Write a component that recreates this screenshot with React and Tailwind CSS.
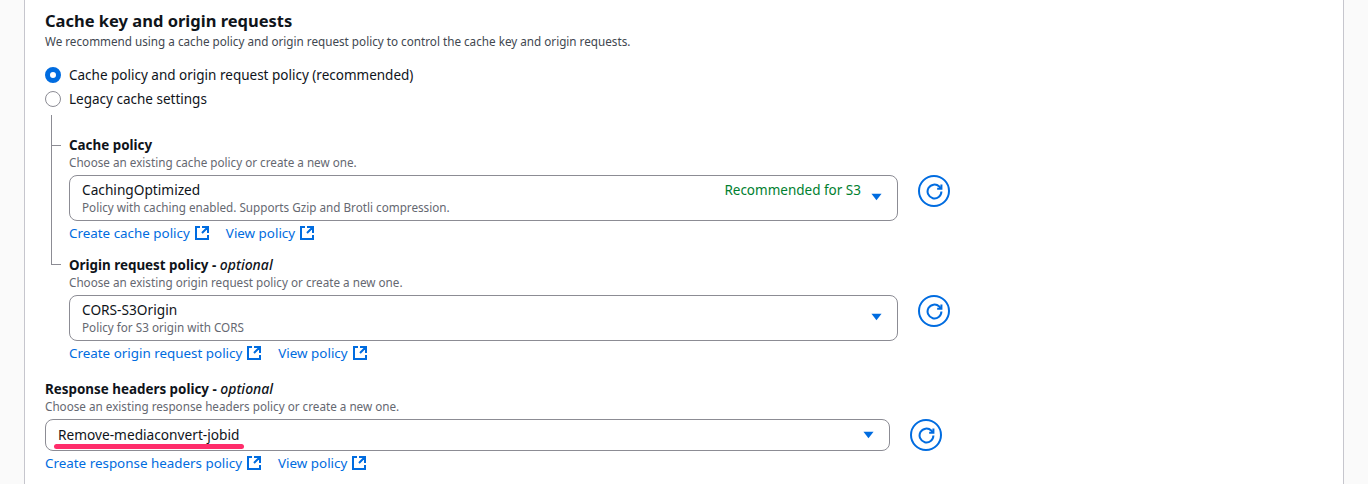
const FONT = "font-['Noto_Sans',sans-serif]";

function Ext() {
  return (
    <svg viewBox="0 0 16 16" className="w-4 h-4 ml-1 shrink-0" fill="none" stroke="#006ce0" strokeWidth="2">
      <path d="M14 8V2H8M14 2L8 8M6 2H2v12h12v-4" />
    </svg>
  );
}

function Links({ create }) {
  return (
    <div className="flex items-center h-5 mt-[2px] gap-4 text-[13.4px] leading-5 text-[#006ce0]">
      <a className="flex items-center">{create}<Ext /></a>
      <a className="flex items-center">View policy<Ext /></a>
    </div>
  );
}

function Refresh() {
  return (
    <button className="w-8 h-8 rounded-full border-2 border-[#006ce0] flex items-center justify-center shrink-0">
      <svg viewBox="0 0 16 16" className="w-[17px] h-[17px]" fill="none" stroke="#006ce0" strokeWidth="1.9">
        <path d="M14.5 8a6.5 6.5 0 1 1-2-4.7L14 5" />
        <path d="M14.5 1.5v4H10.5" />
      </svg>
    </button>
  );
}

function Caret() {
  return (
    <svg viewBox="0 0 12 8" className="w-[11px] h-2 shrink-0">
      <path d="M0.5 0.5h11L6 7.5z" fill="#006ce0" />
    </svg>
  );
}

function Select({ title, desc, tag, small }) {
  return (
    <div className={`flex-1 border border-[#8c8c94] rounded-lg flex pl-3 pr-[15px] ${small ? "h-8 items-center" : "h-[46px] pt-1"}`}>
      <div className="flex-1 min-w-0">
        <div className="text-[13.7px] leading-5 text-[#0f141a]">{title}</div>
        {desc && <div className="text-[11.7px] leading-4 -mt-[1px] text-[#656871]">{desc}</div>}
      </div>
      {tag && <div className="text-[13.5px] leading-5 text-[#00802f] mr-[10px]">{tag}</div>}
      <div className={small ? "flex items-center" : "flex items-center h-[22px] mt-[6px]"}><Caret /></div>
    </div>
  );
}

function Field({ label, optional, hint, children, links }) {
  return (
    <div>
      <div className="text-[13.4px] leading-5 font-bold text-[#0f141a]">
        {label}
        {optional && <span> - <i className="text-[14px] font-medium">optional</i></span>}
      </div>
      <div className="text-[11.7px] leading-4 -mt-[1px] text-[#656871]">{hint}</div>
      <div className="flex items-start gap-5 mt-[5px]">{children}<Refresh /></div>
      <Links create={links} />
    </div>
  );
}

function Radio({ checked, label }) {
  return (
    <label className="flex items-center h-6 text-[13.5px] text-[#0f141a]">
      {checked ? (
        <span className="w-4 h-4 rounded-full border-[5px] border-[#006ce0] bg-white mr-2" />
      ) : (
        <span className="w-4 h-4 rounded-full border border-[#8c8c94] bg-white mr-2" />
      )}
      <span>{label}</span>
    </label>
  );
}

export default function App() {
  return (
    <div className={`${FONT} h-[484px] overflow-hidden bg-[#fafafa] px-6`}>
      <div className="h-full w-[1320px] bg-white border-x border-[#c6c6cd] pl-5 pt-[9px]">
        <h2 className="text-[16.5px] leading-6 font-bold text-[#0f141a]">Cache key and origin requests</h2>
        <p className="text-[11.7px] leading-4 text-[#414750]">We recommend using a cache policy and origin request policy to control the cache key and origin requests.</p>
        <div className="mt-[14px]">
          <Radio checked label="Cache policy and origin request policy (recommended)" />
          <Radio label="Legacy cache settings" />
        </div>
        <div className="relative mt-1 pl-6 pt-5 w-[905px]">
          <span className="absolute left-[6px] top-0 h-[150px] w-[10px] border-l border-b border-[#8c8c94]" />
          <span className="absolute left-[6px] top-[30px] w-[10px] border-t border-[#8c8c94]" />
          <Field
            label="Cache policy"
            hint="Choose an existing cache policy or create a new one."
            links="Create cache policy"
          >
            <Select
              title="CachingOptimized"
              desc="Policy with caching enabled. Supports Gzip and Brotli compression."
              tag="Recommended for S3"
            />
          </Field>
          <div className="mt-3">
            <Field
              label="Origin request policy"
              optional
              hint="Choose an existing origin request policy or create a new one."
              links="Create origin request policy"
            >
              <Select title="CORS-S3Origin" desc="Policy for S3 origin with CORS" />
            </Field>
          </div>
        </div>
        <div className="relative mt-4 w-[897px]">
          <Field
            label="Response headers policy"
            optional
            hint="Choose an existing response headers policy or create a new one."
            links="Create response headers policy"
          >
            <Select title="Remove-mediaconvert-jobid" small />
          </Field>
          <span className="absolute left-[9px] top-[65px] w-[190px] h-[5px] rounded-full bg-[#ff2d6b]" />
        </div>
      </div>
    </div>
  );
}
